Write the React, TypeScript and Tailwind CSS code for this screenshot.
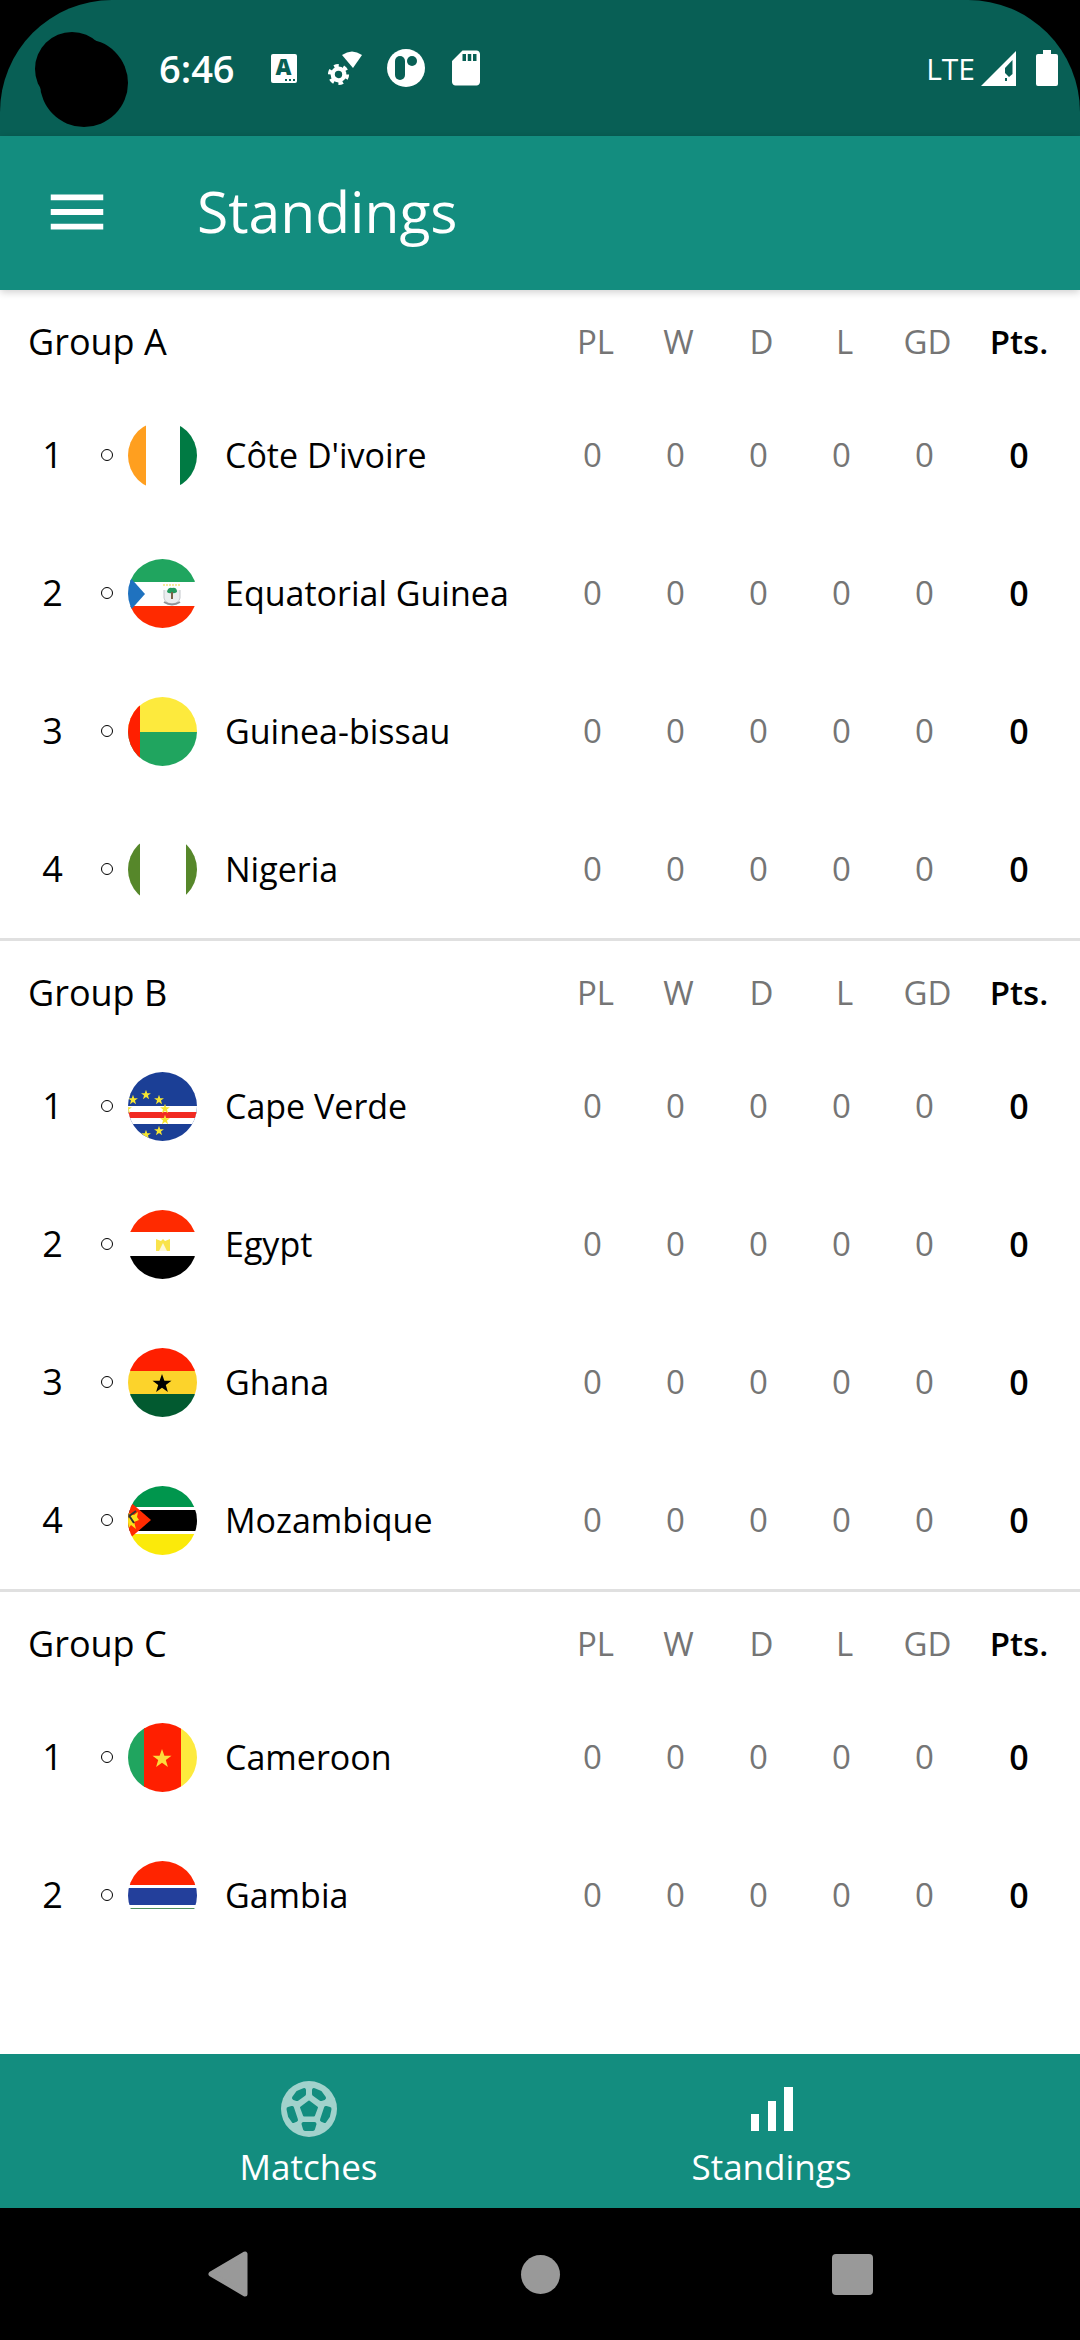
import { ReactNode } from "react";
import { MdMenu, MdSdCard } from "react-icons/md";

const STAR = "M0 -10L2.4 -3.2H9.5L3.8 1L5.9 8L0 3.8L-5.9 8L-3.8 1L-9.5 -3.2H-2.4Z";

function Star({ x, y, s, fill }: { x: number; y: number; s: number; fill: string }) {
  return <path d={STAR} transform={`translate(${x} ${y}) scale(${s})`} fill={fill} />;
}

/** Flag art is drawn in a 69 by 69 box and cut to a circle. */
const flags: Record<string, ReactNode> = {
  ci: (
    <>
      <rect width="18" height="69" fill="#ff9f1f" />
      <rect x="52" width="17" height="69" fill="#007a43" />
    </>
  ),
  gq: (
    <>
      <rect width="69" height="23" fill="#20a55f" />
      <rect y="47" width="69" height="22" fill="#ff2a00" />
      <path d="M0 16L17 35L0 54Z" fill="#1f72bf" />
      <path d="M35 26H52" stroke="#f6ec9c" strokeWidth="2" strokeDasharray="2 1" />
      <path d="M36 31V39Q37 44 44 45Q51 44 52 39V31" fill="#eceef0" stroke="#c3c8cc" />
      <path d="M39 33Q40 28 44 29Q49 28 49 33Q46 35 44 34Q41 35 39 33Z" fill="#249a5d" />
      <path d="M44 33V40" stroke="#7a6248" strokeWidth="2" />
      <path d="M36 43Q44 48 52 43" stroke="#8f9499" strokeWidth="2" fill="none" />
    </>
  ),
  gw: (
    <>
      <rect width="69" height="35" fill="#fdea3d" />
      <rect y="35" width="69" height="34" fill="#20a55f" />
      <rect width="12" height="69" fill="#ff1f00" />
    </>
  ),
  ng: (
    <>
      <rect width="12" height="69" fill="#56872a" />
      <rect x="58" width="11" height="69" fill="#56872a" />
    </>
  ),
  cv: (
    <>
      <rect width="69" height="69" fill="#1b3f96" />
      <rect y="34" width="69" height="18" fill="#fff" />
      <rect y="40" width="69" height="6" fill="#f12a22" />
      {[
        [5, 28], [18, 23], [31, 28], [37, 37], [37, 48], [31, 59], [18, 63], [-1, 37],
      ].map(([x, y]) => (
        <Star key={`${x}-${y}`} x={x} y={y} s={0.52} fill="#f5e532" />
      ))}
    </>
  ),
  eg: (
    <>
      <rect width="69" height="22" fill="#ff2a00" />
      <rect y="46" width="69" height="23" fill="#000" />
      <path d="M28 29L33 31L35 29L37 31L42 29V41H28Z" fill="#f9e34c" />
      <path d="M35 33L31 41H39Z" fill="#fdf8d8" />
    </>
  ),
  gh: (
    <>
      <rect width="69" height="23" fill="#ff1f00" />
      <rect y="23" width="69" height="23" fill="#fcd32b" />
      <rect y="46" width="69" height="23" fill="#025a30" />
      <Star x={34} y={36} s={1} fill="#000" />
    </>
  ),
  mz: (
    <>
      <rect width="69" height="21" fill="#00964d" />
      <rect y="24" width="69" height="21" fill="#000" />
      <rect y="48" width="69" height="21" fill="#fbea0a" />
      <path d="M0 14L23 34L0 54Z" fill="#ff2b00" />
      <path d="M0 27L6 29L10 26L9 31L11 34L6 36L8 43L3 39L0 43Z" fill="#fbe01a" />
      <path d="M0 28L6 37M0 31L8 25" stroke="#333" strokeWidth="2" />
    </>
  ),
  cm: (
    <>
      <rect width="17" height="69" fill="#20a55f" />
      <rect x="16" width="37" height="69" fill="#ff1f00" />
      <rect x="53" width="16" height="69" fill="#fdea3d" />
      <Star x={34} y={36} s={1} fill="#fcdc3c" />
    </>
  ),
  gm: (
    <>
      <rect width="69" height="24" fill="#ff2400" />
      <rect y="27" width="69" height="17" fill="#233f9b" />
      <rect y="47" width="69" height="22" fill="#4f8f5d" />
    </>
  ),
};

function Flag({ code, name }: { code: string; name: string }) {
  return (
    <svg viewBox="0 0 69 69" role="img" aria-label={name} className="size-[69px] shrink-0 rounded-full bg-white">
      {flags[code]}
    </svg>
  );
}

const groups = [
  {
    name: "Group A",
    teams: [["ci", "Côte D'ivoire"], ["gq", "Equatorial Guinea"], ["gw", "Guinea-bissau"], ["ng", "Nigeria"]],
  },
  {
    name: "Group B",
    teams: [["cv", "Cape Verde"], ["eg", "Egypt"], ["gh", "Ghana"], ["mz", "Mozambique"]],
  },
  {
    name: "Group C",
    teams: [["cm", "Cameroon"], ["gm", "Gambia"]],
  },
];

const columns = ["PL", "W", "D", "L", "GD"];

function GroupTable({ name, teams }: { name: string; teams: string[][] }) {
  return (
    <section className="border-b-[3px] border-[#e0e0e0]">
      <table className="w-full table-fixed border-collapse text-[34px]">
        <colgroup>
          <col className="w-[101px]" />
          <col />
          {columns.map((c) => (
            <col key={c} className="w-[83px]" />
          ))}
          <col className="w-[114px]" />
        </colgroup>
        <thead>
          <tr className="h-24">
            <th colSpan={2} className="pt-2 pl-7 text-left text-[36px] font-normal">
              {name}
            </th>
            {columns.map((c) => (
              <th key={c} className="pt-2 pl-1.5 text-center text-[33px] font-normal text-[#757575]">
                {c}
              </th>
            ))}
            <th className="pt-2 pr-2 text-center text-[33px] font-semibold">Pts.</th>
          </tr>
        </thead>
        <tbody>
          {teams.map(([code, team], i) => (
            <tr key={code} className="h-[138px]">
              <td className="pl-1 text-center text-[36px]">{i + 1}</td>
              <td>
                <div className="flex items-center">
                  <span className="mr-[15px] size-3 shrink-0 rounded-full border border-black" />
                  <Flag code={code} name={team} />
                  <span className="ml-7 whitespace-nowrap">{team}</span>
                </div>
              </td>
              {columns.map((c) => (
                <td key={c} className="text-center text-[33px] text-[#757575]">
                  0
                </td>
              ))}
              <td className="pr-2 text-center font-semibold">0</td>
            </tr>
          ))}
        </tbody>
      </table>
    </section>
  );
}

function StatusBar() {
  return (
    <div className="bg-black">
      <div className="relative flex h-[136px] items-center rounded-t-[112px] bg-[#085f55] pr-[22px] pl-[159px] text-white">
        <svg viewBox="0 0 136 136" className="absolute top-0 left-0 size-[136px]" aria-hidden="true">
          <circle cx="72" cy="69" r="37" />
          <circle cx="84" cy="83" r="44" />
        </svg>
        <span className="text-[38px] font-semibold">6:46</span>
        <span className="ml-9 flex h-[29px] w-[26px] flex-col items-center rounded-xs bg-white text-[#085f55]">
          <span className="text-[22px] leading-[25px] font-extrabold">A</span>
          <span className="mr-0.5 h-0.5 w-2.5 self-end border-t-2 border-dotted border-[#085f55]" />
        </span>
        <svg viewBox="0 0 35 35" className="ml-[31px] size-[35px]" aria-hidden="true">
          <path d="M14 4Q24 -3 34 4L25 17Z" fill="#fff" />
          <circle cx="10.500" cy="23.500" r="5.800" fill="none" stroke="#fff" strokeWidth="4.200" />
          <circle cx="10.500" cy="23.500" r="8.600" fill="none" stroke="#fff" strokeWidth="4" strokeDasharray="4.500 4.500" />
        </svg>
        <svg viewBox="0 0 38 38" className="ml-6 size-[38px]" aria-hidden="true">
          <circle cx="19" cy="19" r="19" fill="#fff" />
          <rect x="8" y="7" width="10" height="24" rx="5" fill="#085f55" />
          <circle cx="25" cy="12" r="5" fill="#085f55" />
        </svg>
        <MdSdCard className="ml-5 size-[42px]" />
        <span className="mr-1.5 ml-auto text-[30px]">LTE</span>
        <svg viewBox="0 0 35 35" className="size-[35px]" aria-hidden="true">
          <path fillRule="evenodd" d="M35 0V35H0ZM31.500 9L24 17V22L28 26L31.500 23ZM24 27V30H26V27Z" fill="#fff" />
        </svg>
        <svg viewBox="0 0 22 36" className="ml-5 h-9 w-[22px]" aria-hidden="true">
          <path d="M7 0H15V4H20Q22 4 22 6V34Q22 36 20 36H2Q0 36 0 34V6Q0 4 2 4H7Z" fill="#fff" />
        </svg>
      </div>
    </div>
  );
}

function SoccerBall() {
  return (
    <svg viewBox="0 0 56 56" className="size-14" aria-hidden="true">
      <circle cx="28" cy="28" r="28" fill="#a1d2cc" />
      <g fill="#138d7f" stroke="#138d7f" strokeWidth="4" strokeLinejoin="round">
        <path d="M28 20.500L36 26.500L33 34.500H23L20 26.500Z" strokeWidth="2" />
        <path d="M22.500 43H33.500L32 48H24Z" />
        <path d="M45 27L48.500 28L47 35L43.500 40L41 39Z" />
        <path d="M11 27L7.500 28L9 35L12.500 40L15 39Z" />
        <path d="M33 9V13L40 18L43 17L39 11.500Z" />
        <path d="M23 9V13L16 18L13 17L17 11.500Z" />
      </g>
    </svg>
  );
}

function Bars() {
  return (
    <svg viewBox="0 0 56 56" className="size-14" fill="#fff" aria-hidden="true">
      <rect x="7" y="33" width="8" height="17" />
      <rect x="24" y="20" width="8" height="30" />
      <rect x="40" y="6" width="9" height="44" />
    </svg>
  );
}

export default function App() {
  return (
    <div className="flex min-h-screen flex-col bg-white font-['Open_Sans',sans-serif] text-black">
      <StatusBar />
      <header className="relative flex h-[154px] items-center bg-[#138d7f] pb-0.5 pl-[42px] text-white shadow-[0_2px_8px_rgba(0,0,0,0.2)]">
        <button type="button" aria-label="Open menu">
          <MdMenu className="size-[70px]" />
        </button>
        <h1 className="ml-[85px] text-[57px]">Standings</h1>
      </header>
      <main className="mb-[145px] h-0 grow overflow-hidden">
        {groups.map((g) => (
          <GroupTable key={g.name} name={g.name} teams={g.teams} />
        ))}
      </main>
      <nav className="flex h-[154px] bg-[#138d7f] px-[77px] text-[35px] text-white">
        <a href="#matches" className="flex flex-1 flex-col items-center pt-[27px]">
          <SoccerBall />
          <span className="leading-[60px]">Matches</span>
        </a>
        <a href="#standings" aria-current="page" className="flex flex-1 flex-col items-center pt-[27px]">
          <Bars />
          <span className="leading-[60px]">Standings</span>
        </a>
      </nav>
      <div className="grid h-[132px] grid-cols-3 place-items-center bg-black px-[72px]">
        <button type="button" aria-label="Back">
          <svg viewBox="0 0 40 46" className="h-[46px] w-10" aria-hidden="true">
            <path d="M37 3V43L3 23Z" fill="#999" stroke="#999" strokeWidth="5" strokeLinejoin="round" />
          </svg>
        </button>
        <button type="button" aria-label="Home" className="size-[39px] rounded-full bg-[#999]" />
        <button type="button" aria-label="Recent apps" className="size-[41px] rounded bg-[#999]" />
      </div>
    </div>
  );
}
